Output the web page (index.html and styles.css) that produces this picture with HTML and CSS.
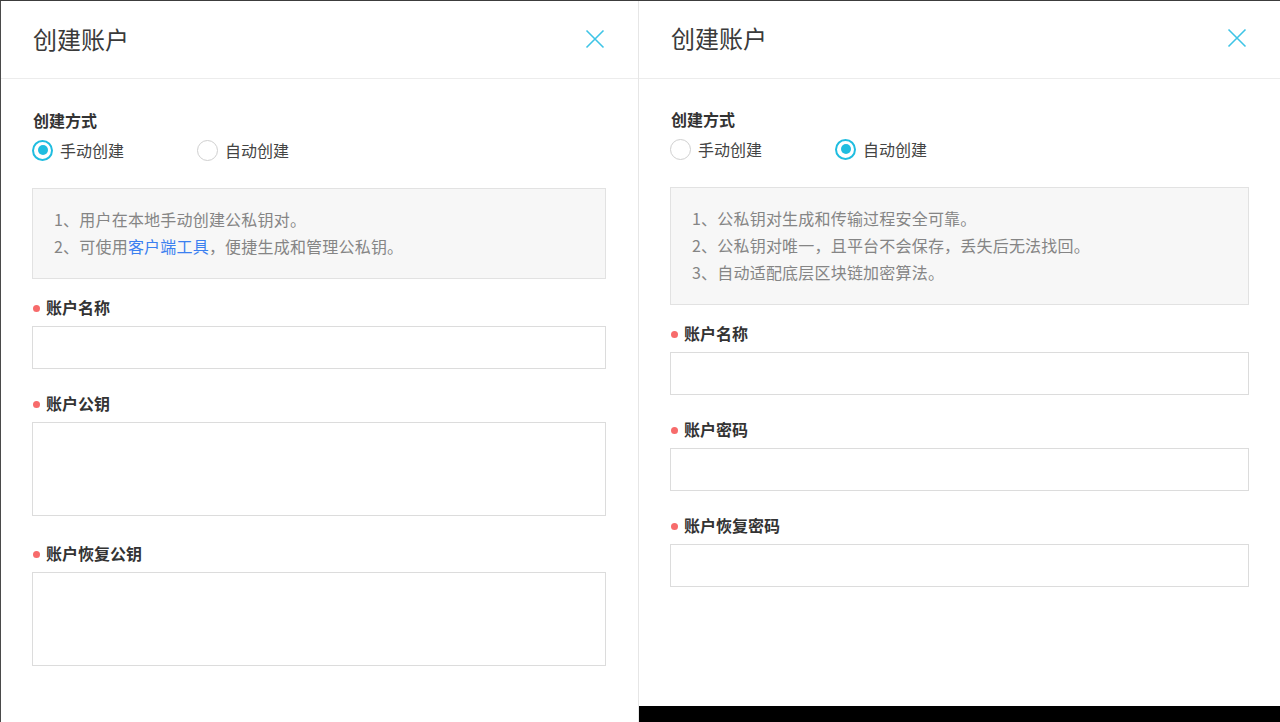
FILE: index.html
```html
<!DOCTYPE html>
<html lang="zh-CN">
<head>
<meta charset="utf-8">
<title>创建账户</title>
<link rel="stylesheet" href="styles.css">
</head>
<body>
<div class="screen">
  <section class="panel panel-left">
    <header class="panel-header">
      <h1 class="panel-title">创建账户</h1>
      <svg class="close-icon" width="20" height="20" viewBox="0 0 20 20"><path d="M1.5 1.5 L18.5 18.5 M18.5 1.5 L1.5 18.5" stroke="#3ec4e6" stroke-width="1.6" fill="none"/></svg>
    </header>
    <div class="panel-body">
      <div class="field-label plain">创建方式</div>
      <div class="radio-row">
        <label class="radio checked"><span class="radio-dot"></span>手动创建</label>
        <label class="radio"><span class="radio-dot"></span>自动创建</label>
      </div>
      <div class="info-box">
        <p>1、用户在本地手动创建公私钥对。</p>
        <p>2、可使用<a class="link">客户端工具</a>，便捷生成和管理公私钥。</p>
      </div>
      <div class="form-item">
        <div class="field-label required">账户名称</div>
        <div class="input"></div>
      </div>
      <div class="form-item tall">
        <div class="field-label required">账户公钥</div>
        <div class="textarea"></div>
      </div>
      <div class="form-item tall">
        <div class="field-label required">账户恢复公钥</div>
        <div class="textarea"></div>
      </div>
    </div>
  </section>
  <section class="panel panel-right">
    <header class="panel-header">
      <h1 class="panel-title">创建账户</h1>
      <svg class="close-icon" width="20" height="20" viewBox="0 0 20 20"><path d="M1.5 1.5 L18.5 18.5 M18.5 1.5 L1.5 18.5" stroke="#3ec4e6" stroke-width="1.6" fill="none"/></svg>
    </header>
    <div class="panel-body">
      <div class="field-label plain">创建方式</div>
      <div class="radio-row">
        <label class="radio"><span class="radio-dot"></span>手动创建</label>
        <label class="radio checked"><span class="radio-dot"></span>自动创建</label>
      </div>
      <div class="info-box">
        <p>1、公私钥对生成和传输过程安全可靠。</p>
        <p>2、公私钥对唯一，且平台不会保存，丢失后无法找回。</p>
        <p>3、自动适配底层区块链加密算法。</p>
      </div>
      <div class="form-item">
        <div class="field-label required">账户名称</div>
        <div class="input"></div>
      </div>
      <div class="form-item">
        <div class="field-label required">账户密码</div>
        <div class="input"></div>
      </div>
      <div class="form-item">
        <div class="field-label required">账户恢复密码</div>
        <div class="input"></div>
      </div>
    </div>
    <div class="bottom-bar"></div>
  </section>
</div>
</body>
</html>
```

FILE: styles.css
```css
* { box-sizing: border-box; }
html, body {
  margin: 0;
  padding: 0;
  background: #ffffff;
}
body {
  font-family: "Noto Sans CJK SC", "Noto Sans", "Liberation Sans", sans-serif;
  color: #333;
}
.screen {
  display: flex;
  width: 1280px;
  height: 722px;
  border-top: 1px solid #3c3c3c;
  overflow: hidden;
}
.panel {
  display: flex;
  flex-direction: column;
  background: #fff;
}
.panel-left {
  width: 638px;
  border-left: 1px solid #4a4a4a;
}
.panel-right {
  flex: 1;
  border-left: 1px solid #e6e6e6;
}
.panel-header {
  height: 78px;
  border-bottom: 1px solid #ececec;
  display: flex;
  align-items: center;
  justify-content: space-between;
  padding: 0 33px 1px 32px;
}
.panel-right .panel-header {
  padding: 0 33px 4px 32px;
}
.panel-title {
  margin: 0;
  font-size: 24px;
  font-weight: 400;
  color: #3a3a3a;
  line-height: 32px;
}
.close-icon {
  display: block;
}
.panel-body {
  flex: 1;
  padding: 29px 32px 0 31px;
}
.panel-right .panel-body {
  padding: 28px 31px 0 31px;
}
.field-label {
  font-size: 16px;
  font-weight: 700;
  line-height: 24px;
  color: #333;
  display: flex;
  align-items: center;
}
.field-label.plain {
  padding-left: 1px;
}
.field-label.required::before {
  content: "";
  width: 7px;
  height: 7px;
  border-radius: 50%;
  background: #f76b6b;
  margin: 2px 6px 0 1px;
}
.radio-row {
  display: flex;
  margin-top: 6px;
  height: 24px;
  align-items: center;
}
.radio {
  display: flex;
  align-items: center;
  font-size: 16px;
  line-height: 24px;
  color: #444;
  width: 165px;
}
.radio-dot {
  width: 21px;
  height: 21px;
  border-radius: 50%;
  border: 1px solid #cfcfcf;
  margin-right: 7px;
  position: relative;
  flex: none;
  background: #fff;
}
.radio.checked .radio-dot {
  border: 2px solid #1fbde0;
}
.radio.checked .radio-dot::after {
  content: "";
  position: absolute;
  left: 3.5px;
  top: 3.5px;
  width: 10px;
  height: 10px;
  border-radius: 50%;
  background: #1fbde0;
}
.info-box {
  margin-top: 26px;
  background: #f7f7f7;
  border: 1px solid #e2e2e2;
  padding: 17px 21px 18px;
}
.info-box p {
  margin: 0;
  font-size: 16px;
  line-height: 27px;
  color: #858585;
  letter-spacing: 0.2px;
}
.link {
  color: #3b80f0;
}
.form-item {
  margin-top: 16px;
}
.form-item + .form-item {
  margin-top: 22px;
}
.form-item.tall {
  padding-bottom: 3px;
}
.form-item .field-label {
  margin-bottom: 7px;
}
.input {
  height: 43px;
  border: 1px solid #dcdcdc;
  background: #fff;
}
.textarea {
  height: 94px;
  border: 1px solid #dcdcdc;
  background: #fff;
}
.bottom-bar {
  height: 16px;
  background: #000;
  flex: none;
}
```
